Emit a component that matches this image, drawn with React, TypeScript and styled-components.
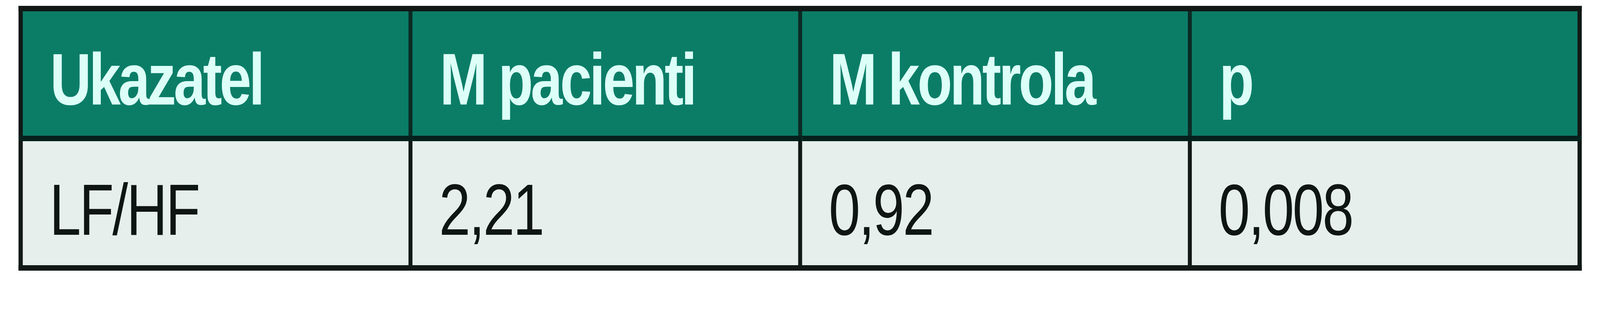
import React from "react";
import styled, { createGlobalStyle } from "styled-components";

const GlobalStyle = createGlobalStyle`
  html, body {
    margin: 0;
    padding: 0;
    background: #ffffff;
    overflow: hidden;
  }
`;

// the table is drawn for a 5268px wide frame; narrower windows squeeze it sideways
const FRAME_WIDTH = 5268;

const rows = [{ name: "LF/HF", patients: "2,21", control: "0,92", p: "0,008" }];

const App = () => {
  const scale = Math.min(1, window.innerWidth / FRAME_WIDTH);

  return (
    <Page $scale={scale}>
      <GlobalStyle />
      <Table>
        <thead>
          <tr>
            <Head>Ukazatel</Head>
            <Head>M pacienti</Head>
            <Head>M kontrola</Head>
            <Head>p</Head>
          </tr>
        </thead>
        <tbody>
          {rows.map((row) => (
            <tr key={row.name}>
              <Cell>{row.name}</Cell>
              <Cell>{row.patients}</Cell>
              <Cell>{row.control}</Cell>
              <Cell>{row.p}</Cell>
            </tr>
          ))}
        </tbody>
      </Table>
    </Page>
  );
};

export default App;

const Page = styled.div<{ $scale: number }>`
  width: ${FRAME_WIDTH}px;
  height: 800px;
  padding: 15px 0 0 61px;
  box-sizing: border-box;
  background: #ffffff;
  transform: scaleX(${(p) => p.$scale});
  transform-origin: left top;
`;

const Table = styled.table`
  width: 5147px;
  border-collapse: collapse;
  table-layout: fixed;
  border: 14px solid #111815;
`;

const Head = styled.th`
  background: #0b7d67;
  color: #dcfff8;
  font-family: "Liberation Sans", Arial, sans-serif;
  font-weight: 700;
  font-size: 188px;
  line-height: 1;
  letter-spacing: -8px;
  text-align: left;
  padding: 80px 0 51px 90px;
  border-right: 13px solid #0c2a24;
  border-bottom: 14px solid #06201b;
  white-space: nowrap;
`;

const Cell = styled.td`
  background: #e6efec;
  color: #0f1512;
  font-family: "Liberation Sans", Arial, sans-serif;
  font-weight: 400;
  font-size: 186px;
  line-height: 1;
  letter-spacing: -5px;
  text-align: left;
  padding: 83px 0 49px 88px;
  border-right: 13px solid #111815;
  white-space: nowrap;
`;
